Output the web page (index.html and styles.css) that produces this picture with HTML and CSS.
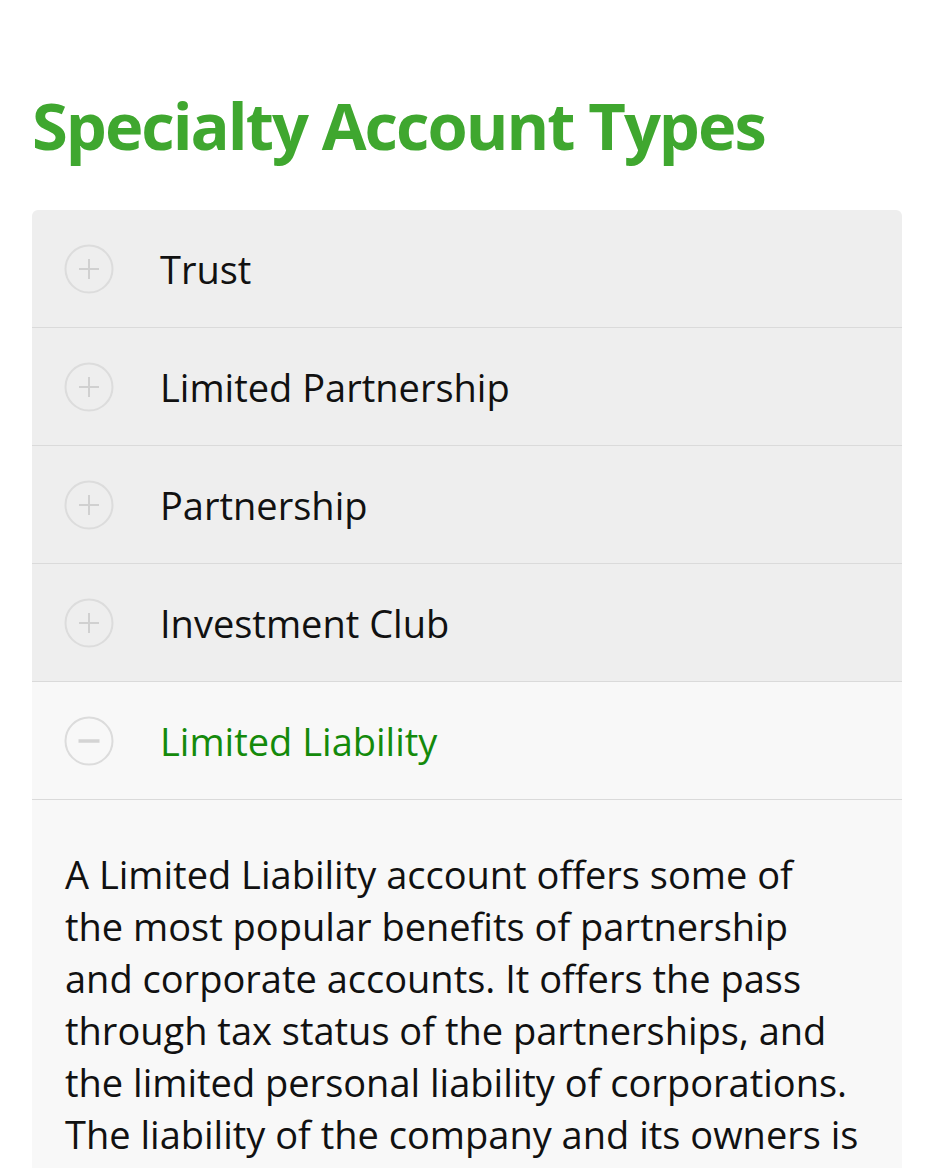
FILE: index.html
```html
<!DOCTYPE html>
<html>
<head>
<meta charset="utf-8">
<link rel="stylesheet" href="styles.css">
</head>
<body>
<main class="page">
  <h1 class="title">Specialty Account Types</h1>
  <div class="accordion">
    <div class="row">
      <span class="icon"><svg viewBox="0 0 50 50" width="50" height="50"><circle cx="25" cy="25" r="23.5" fill="none" stroke="#dcdcdc" stroke-width="2"/><path d="M25 15v20M15 25h20" stroke="#d0d0d0" stroke-width="2"/></svg></span>
      <span class="label">Trust</span>
    </div>
    <div class="row">
      <span class="icon"><svg viewBox="0 0 50 50" width="50" height="50"><circle cx="25" cy="25" r="23.5" fill="none" stroke="#dcdcdc" stroke-width="2"/><path d="M25 15v20M15 25h20" stroke="#d0d0d0" stroke-width="2"/></svg></span>
      <span class="label">Limited Partnership</span>
    </div>
    <div class="row">
      <span class="icon"><svg viewBox="0 0 50 50" width="50" height="50"><circle cx="25" cy="25" r="23.5" fill="none" stroke="#dcdcdc" stroke-width="2"/><path d="M25 15v20M15 25h20" stroke="#d0d0d0" stroke-width="2"/></svg></span>
      <span class="label">Partnership</span>
    </div>
    <div class="row">
      <span class="icon"><svg viewBox="0 0 50 50" width="50" height="50"><circle cx="25" cy="25" r="23.5" fill="none" stroke="#dcdcdc" stroke-width="2"/><path d="M25 15v20M15 25h20" stroke="#d0d0d0" stroke-width="2"/></svg></span>
      <span class="label">Investment Club</span>
    </div>
    <div class="row open">
      <span class="icon"><svg viewBox="0 0 50 50" width="50" height="50"><circle cx="25" cy="25" r="23.5" fill="none" stroke="#dcdcdc" stroke-width="2"/><path d="M14.5 25h21" stroke="#d4d4d4" stroke-width="3.5"/></svg></span>
      <span class="label">Limited Liability</span>
    </div>
    <div class="panel">
      <p>A Limited Liability account offers some of<br>the most popular benefits of partnership and corporate accounts. It offers the pass through tax status of the partnerships, and the limited personal liability of corporations. The liability of the company and its owners is limited to the assets of the company.</p>
    </div>
  </div>
</main>
</body>
</html>
```
FILE: styles.css
```css
html, body {
  margin: 0;
  padding: 0;
  background: #ffffff;
}
body {
  font-family: "Open Sans", "Lato", sans-serif;
  color: #111;
}
.page {
  padding: 0 32px;
}
.title {
  margin: 0;
  padding-top: 78px;
  padding-bottom: 38px;
  font-size: 65px;
  line-height: 94px;
  font-weight: 700;
  color: #3fa72f;
  letter-spacing: -2px;
}
.accordion {
  border-radius: 6px 6px 0 0;
  overflow: hidden;
}
.row {
  display: flex;
  align-items: center;
  height: 117px;
  background: #eeeeee;
  border-bottom: 1px solid #dadada;
  padding-left: 32px;
}
.row.open {
  background: #f8f8f8;
}
.icon {
  display: flex;
  width: 50px;
  height: 50px;
  margin-right: 46px;
}
.label {
  font-size: 38px;
  color: #111;
}
.row.open .label {
  color: #148a0b;
}
.panel {
  background: #f8f8f8;
  padding: 48px 39px 40px 33px;
}
.panel p {
  margin: 0;
  font-size: 38px;
  line-height: 52px;
  color: #111;
}
```
